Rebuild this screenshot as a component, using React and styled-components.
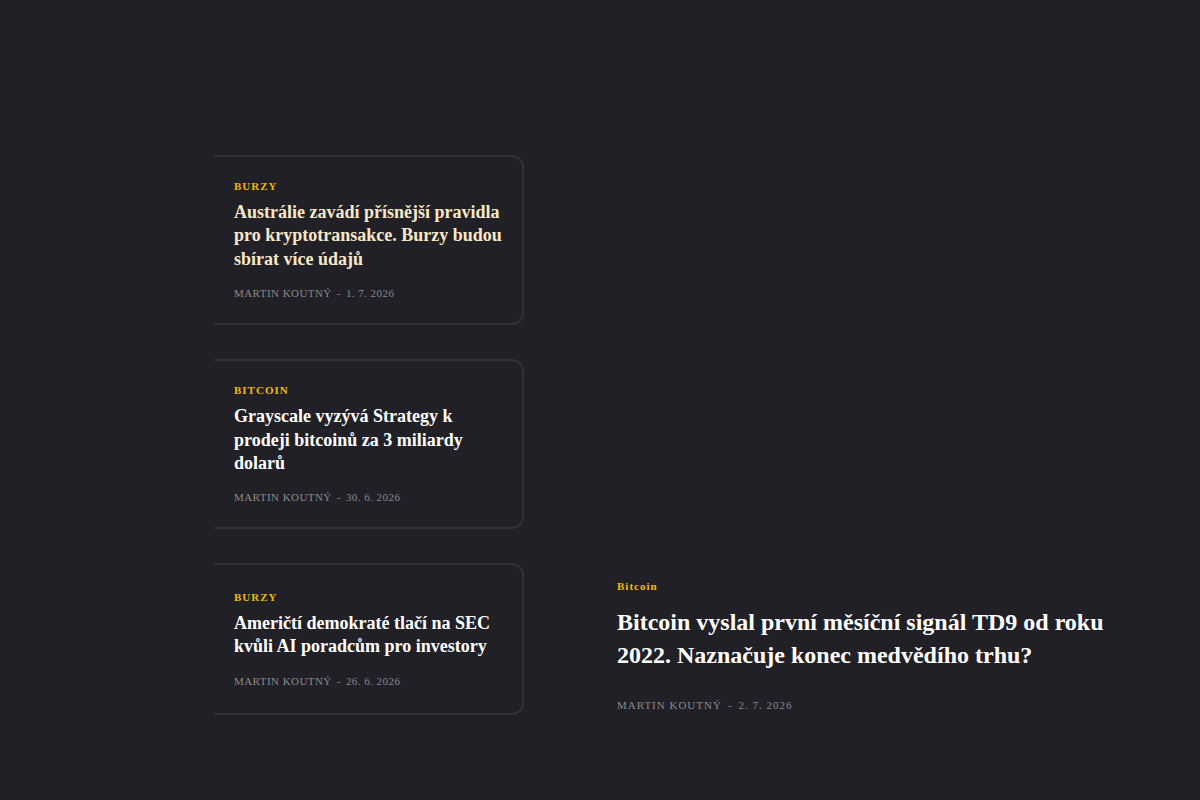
import React from "react";
import styled, { createGlobalStyle } from "styled-components";

const GlobalStyle = createGlobalStyle`
  html, body {
    margin: 0;
    padding: 0;
    background: #212026;
  }
  body {
    font-family: "Liberation Serif", "Times New Roman", serif;
    color: #ffffff;
    min-height: 800px;
  }
  * { box-sizing: border-box; }
`;

const Page = styled.main`
  padding: 155px 0 0 214px;
  display: flex;
  align-items: flex-end;
  gap: 93px;
`;

const List = styled.div`
  width: 310px;
  display: flex;
  flex-direction: column;
  gap: 34px;
  flex-shrink: 0;
`;

const Card = styled.article`
  min-height: 152px;
  border: 2px solid #323137;
  border-left: none;
  border-radius: 0 12px 12px 0;
  padding: 22px 20px 23px 20px;
  display: flex;
  flex-direction: column;
  justify-content: center;
`;

const Category = styled.div`
  font-size: 11px;
  line-height: 14px;
  font-weight: 700;
  letter-spacing: 1px;
  text-transform: ${(p) => (p.$upper ? "uppercase" : "none")};
  color: #f0b90b;
`;

const CardTitle = styled.h3`
  margin: 8px 0 0;
  font-size: 18px;
  line-height: 23.4px;
  font-weight: 700;
  color: ${(p) => (p.$active ? "#f8e8c8" : "#ffffff")};
`;

const Meta = styled.div`
  margin-top: ${(p) => (p.$large ? 26 : 15)}px;
  font-size: 11px;
  line-height: 14px;
  letter-spacing: ${(p) => (p.$large ? "1px" : "0.45px")};
  text-transform: uppercase;
  color: #8b8a90;
  display: flex;
  align-items: center;
`;

const Dash = styled.span`
  margin: 0 ${(p) => (p.$large ? 6 : 5)}px;
`;

const Feature = styled.section`
  width: 520px;
  padding-bottom: 3px;
  display: flex;
  flex-direction: column;
`;

const FeatureTitle = styled.h2`
  margin: 13px 0 0;
  font-size: 24px;
  line-height: 33px;
  font-weight: 700;
  color: #ffffff;
`;

const articles = [
  {
    category: "Burzy",
    title: "Austrálie zavádí přísnější pravidla pro kryptotransakce. Burzy budou sbírat více údajů",
    date: "1. 7. 2026",
    active: true,
  },
  {
    category: "Bitcoin",
    title: "Grayscale vyzývá Strategy k prodeji bitcoinů za 3 miliardy dolarů",
    date: "30. 6. 2026",
  },
  {
    category: "Burzy",
    title: "Američtí demokraté tlačí na SEC kvůli AI poradcům pro investory",
    date: "26. 6. 2026",
  },
];

export default function App() {
  return (
    <>
      <GlobalStyle />
      <Page>
        <List>
          {articles.map((a) => (
            <Card key={a.title}>
              <Category $upper>{a.category}</Category>
              <CardTitle $active={a.active}>{a.title}</CardTitle>
              <Meta>
                <span>Martin Koutný</span>
                <Dash>-</Dash>
                <span>{a.date}</span>
              </Meta>
            </Card>
          ))}
        </List>
        <Feature>
          <Category>Bitcoin</Category>
          <FeatureTitle>
            Bitcoin vyslal první měsíční signál TD9 od roku 2022. Naznačuje konec medvědího trhu?
          </FeatureTitle>
          <Meta $large>
            <span>Martin Koutný</span>
            <Dash $large>-</Dash>
            <span>2. 7. 2026</span>
          </Meta>
        </Feature>
      </Page>
    </>
  );
}
